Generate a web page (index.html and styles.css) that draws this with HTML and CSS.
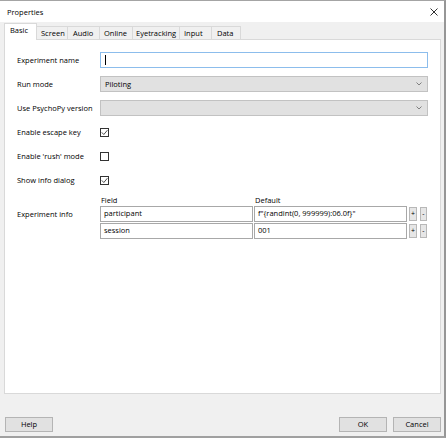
FILE: index.html
```html
<!DOCTYPE html>
<html>
<head>
<meta charset="utf-8">
<title>Properties</title>
<link rel="stylesheet" href="styles.css">
</head>
<body>
<div class="window">
  <div class="titlebar">
    <span class="title">Properties</span>
    <svg class="close" width="8" height="8" viewBox="0 0 8 8"><path d="M0.5 0.5L7.5 7.5M7.5 0.5L0.5 7.5" stroke="#1a1a1a" stroke-width="0.9" fill="none"/></svg>
  </div>
  <div class="tabs">
    <div class="tab active t-basic">Basic</div>
    <div class="tab t-screen">Screen</div>
    <div class="tab t-audio">Audio</div>
    <div class="tab t-online">Online</div>
    <div class="tab t-eye">Eyetracking</div>
    <div class="tab t-input">Input</div>
    <div class="tab t-data">Data</div>
  </div>
  <div class="panel">
    <div class="form">
      <div class="label">Experiment name</div>
      <div class="input focus"><span class="caret"></span></div>

      <div class="label">Run mode</div>
      <div class="select"><span>Piloting</span><svg class="chev" width="6" height="4" viewBox="0 0 6 4"><path d="M0.5 0.5L3 3L5.5 0.5" stroke="#666" stroke-width="0.8" fill="none"/></svg></div>

      <div class="label">Use PsychoPy version</div>
      <div class="select"><span></span><svg class="chev" width="6" height="4" viewBox="0 0 6 4"><path d="M0.5 0.5L3 3L5.5 0.5" stroke="#666" stroke-width="0.8" fill="none"/></svg></div>

      <div class="label">Enable escape key</div>
      <div class="cbcell"><span class="checkbox"><svg width="9" height="9" viewBox="0 0 9 9"><path d="M1.8 4.4L3.8 6.5L7.4 2.2" stroke="#222" stroke-width="0.8" fill="none"/></svg></span></div>

      <div class="label">Enable 'rush' mode</div>
      <div class="cbcell"><span class="checkbox"></span></div>

      <div class="label">Show info dialog</div>
      <div class="cbcell"><span class="checkbox"><svg width="9" height="9" viewBox="0 0 9 9"><path d="M1.8 4.4L3.8 6.5L7.4 2.2" stroke="#222" stroke-width="0.8" fill="none"/></svg></span></div>

      <div class="label info-label">Experiment info</div>
      <div class="table">
        <div class="thead">
          <span class="th th-field">Field</span>
          <span class="th">Default</span>
        </div>
        <div class="trow">
          <div class="cell c-field">participant</div>
          <div class="cell c-default">f"{randint(0, 999999):06.0f}"</div>
          <div class="mini plus">+</div>
          <div class="mini minus">-</div>
        </div>
        <div class="trow">
          <div class="cell c-field">session</div>
          <div class="cell c-default">001</div>
          <div class="mini plus">+</div>
          <div class="mini minus">-</div>
        </div>
      </div>
    </div>
  </div>
  <div class="buttons">
    <div class="btn">Help</div>
    <div class="spacer"></div>
    <div class="btn">OK</div>
    <div class="btn btn-cancel">Cancel</div>
  </div>
</div>
</body>
</html>
```

FILE: styles.css
```css
* { box-sizing: border-box; }
html, body { margin: 0; padding: 0; }
body {
  font-family: "Open Sans", "Noto Sans", sans-serif;
  font-size: 7.5px;
  color: #000;
  background: #f0f0f0;
}
.window {
  width: 446px;
  height: 438px;
  background: #f0f0f0;
  border-top: 1px solid #a4a4a4;
  border-right: 2px solid #969696;
  border-bottom: 2px solid #a0a0a0;
  display: flex;
  flex-direction: column;
}
.titlebar {
  height: 21px;
  flex: none;
  background: #fff;
  display: flex;
  align-items: center;
  padding: 0 6px 0 7px;
}
.title { flex: 1; line-height: 10px; }
.close { display: block; margin-top: 1px; }

.tabs {
  flex: none;
  height: 16px;
  margin: 1px 0 0 4px;
  display: flex;
  align-items: flex-end;
}
.tab {
  height: 13px;
  line-height: 12px;
  padding: 0 0 0 4px;
  background: #f0f0f0;
  border: 1px solid #d9d9d9;
  border-left: none;
  border-bottom: none;
  white-space: nowrap;
}
.tab.active {
  height: 17px;
  line-height: 13px;
  padding-left: 5px;
  background: #fff;
  border-left: 1px solid #d9d9d9;
  margin-bottom: -1px;
  position: relative;
  z-index: 1;
}
.t-basic { width: 33px; }
.t-screen { width: 31px; }
.t-audio { width: 32px; padding-left: 5px; }
.t-online { width: 33px; }
.t-eye { width: 47px; padding-left: 3px; }
.t-input { width: 32px; }
.t-data { width: 29px; padding-left: 5px; }

.panel {
  flex: none;
  height: 355px;
  width: 437px;
  margin-left: 4px;
  background: #fff;
  border: 1px solid #d9d9d9;
}
.form {
  display: grid;
  grid-template-columns: 83px 1fr;
  row-gap: 8px;
  padding: 12px 12px 0 12px;
}
.label {
  align-self: center;
  line-height: 10px;
  white-space: nowrap;
}
.input {
  height: 16px;
  background: #fff;
  border: 1px solid #8cbdec;
  display: flex;
  align-items: center;
  padding-left: 4px;
}
.caret {
  display: block;
  width: 1px;
  height: 10px;
  background: #000;
}
.select {
  height: 16px;
  background: #e1e1e1;
  border: 1px solid #c2c2c2;
  display: flex;
  align-items: center;
  padding: 0 5px 0 4px;
}
.select span { flex: 1; line-height: 10px; }
.chev { display: block; }

.cbcell {
  height: 16px;
  display: flex;
  align-items: center;
}
.checkbox {
  width: 9px;
  height: 9px;
  border: 1px solid #333;
  background: #fff;
  display: block;
  position: relative;
}
.checkbox svg {
  display: block;
  margin: -1px 0 0 -1px;
}

.info-label {
  align-self: start;
  margin-top: 13px;
}
.table { display: flex; flex-direction: column; }
.thead {
  height: 10px;
  line-height: 9px;
  display: flex;
}
.th { padding-left: 1px; }
.th-field { width: 154px; }
.trow {
  display: flex;
  align-items: center;
  height: 16px;
  margin-bottom: 1px;
}
.cell {
  height: 16px;
  border: 1px solid #a8a8a8;
  background: #fff;
  line-height: 13px;
  padding-left: 3px;
  white-space: nowrap;
  overflow: hidden;
}
.c-field { width: 153px; }
.c-default { width: 153px; margin-left: 1px; }
.mini {
  height: 14px;
  border: 1px solid #b8b8b8;
  background: #e6e6e6;
  text-align: center;
  line-height: 11px;
  font-size: 7px;
}
.plus { width: 8px; margin-left: 2px; }
.minus { width: 7px; margin-left: 3px; }

.buttons {
  flex: none;
  display: flex;
  margin-top: 23px;
  padding: 0 3px 0 5px;
}
.spacer { flex: 1; }
.btn {
  width: 48px;
  height: 15px;
  background: #e1e1e1;
  border: 1px solid #b4b4b4;
  text-align: center;
  line-height: 12px;
}
.btn-cancel { margin-left: 6px; }
```
